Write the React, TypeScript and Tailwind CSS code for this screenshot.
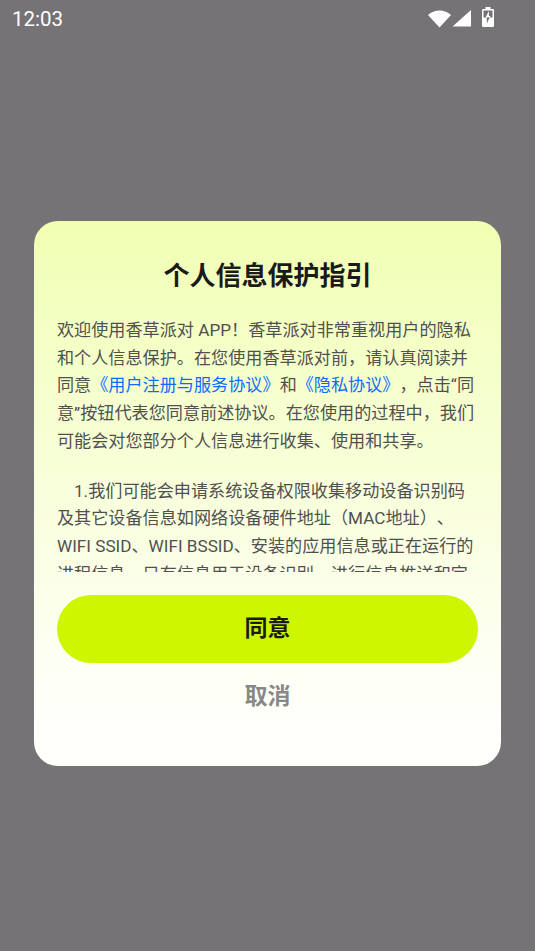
import React from 'react'

const cjk = "font-['Roboto','Noto_Sans_CJK_SC',sans-serif]"

const StatusIcons = () => (
  <div className="flex items-start">
    {/* wifi */}
    <svg width="23" height="18" viewBox="0 0 23 18" className="mt-[1px] block">
      <path d="M0 5C3.200 2 7.100 0.500 11.500 0.500S19.800 2 23 5L11.500 17.500z" fill="#fff" />
    </svg>
    {/* signal */}
    <svg width="19" height="17" viewBox="0 0 19 17" className="ml-[1px] mt-[1px] block">
      <path d="M19 0V16.500H0.500z" fill="#fff" />
    </svg>
    {/* battery, charging */}
    <svg width="12" height="20" viewBox="0 0 12 20" className="ml-[11px] -mt-[2px] block">
      <path d="M3.500 0h5v2h2.300a1.200 1.200 0 0 1 1.200 1.200v15.600a1.200 1.200 0 0 1-1.200 1.200H1.200A1.200 1.200 0 0 1 0 18.800V3.200A1.200 1.200 0 0 1 1.200 2h2.300z" fill="#fff" />
      <path d="M1.500 3.500h9v7h-9z" fill="#757376" />
      <path d="M6.800 4 3.500 10.500h4.300L8.500 9H7z" fill="#fff" />
      <path d="M4.700 10.500h2.800L5 16.500z" fill="#757376" />
    </svg>
  </div>
)

export default function App() {
  return (
    <div className={`flex h-screen w-full flex-col bg-[#757376] ${cjk}`}>
      <div className="flex h-9 shrink-0 items-center justify-between pl-3 pr-[41px]">
        <span className="mt-[2px] text-[20.500px] leading-none text-white">12:03</span>
        <StatusIcons />
      </div>

      <div className="flex flex-1 items-center justify-center">
        <div className="flex h-[545px] w-[467px] flex-col rounded-[24px] bg-gradient-to-b from-[#f1ffb3] to-[#fffffb] to-[92%] px-[23px]">
          <h1 className="mt-[38px] text-center text-[26px] font-bold leading-[34px] text-[#1a1a1a]">
            个人信息保护指引
          </h1>

          <div className="mt-[24px] h-[255px] overflow-hidden text-[17.140px] leading-[27.700px] text-[#505050] [text-spacing-trim:space-all]">
            <p>
              欢迎使用香草派对 APP！香草派对非常重视用户的隐私和个人信息保护。在您使用香草派对前，请认真阅读并同意
              <span className="text-[#0a6cff]">《用户注册与服务协议》</span>和
              <span className="text-[#0a6cff]">《隐私协议》</span>，点击“同意”按钮代表您同意前述协议。在您使用的过程中，我们可能会对您部分个人信息进行收集、使用和共享。
            </p>
            <p className="mt-[22px] indent-[17px]">
              1.我们可能会申请系统设备权限收集移动设备识别码及其它设备信息如网络设备硬件地址（MAC地址）、WIFI SSID、WIFI BSSID、安装的应用信息或正在运行的进程信息，只有信息用于设备识别，进行信息推送和定位服务。
            </p>
          </div>

          <button className="mt-[23px] h-[68px] w-full shrink-0 rounded-full bg-[#cdf600] text-[23px] font-bold text-[#1a1a1a]">
            同意
          </button>
          <button className="mt-[11px] h-[46px] w-full shrink-0 text-[23px] font-bold text-[#888]">
            取消
          </button>
        </div>
      </div>
    </div>
  )
}
